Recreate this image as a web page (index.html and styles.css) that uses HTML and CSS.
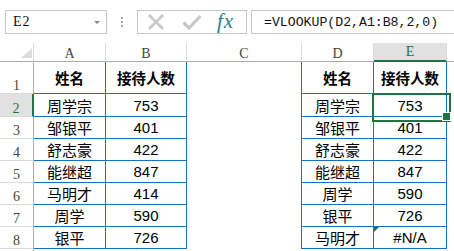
FILE: index.html
```html
<!DOCTYPE html>
<html lang="zh">
<head>
<meta charset="utf-8">
<title>VLOOKUP</title>
<link rel="stylesheet" href="styles.css">
</head>
<body>
<div class="fbar">
  <div class="namebox"><span>E2</span><span class="caret"></span></div>
  <div class="grip">
    <svg width="3" height="11" viewBox="0 0 3 11"><rect x="0" y="0" width="2" height="2" fill="#a8a8a8"/><rect x="0" y="4" width="2" height="2" fill="#a8a8a8"/><rect x="0" y="8" width="2" height="2" fill="#a8a8a8"/></svg>
  </div>
  <div class="icons">
    <svg class="ic-x" width="18" height="16" viewBox="0 0 18 16"><path d="M2 1 L16 15 M16 1 L2 15" stroke="#c8c8c8" stroke-width="2.6" fill="none"/></svg>
    <svg class="ic-ok" width="20" height="16" viewBox="0 0 20 16"><path d="M1.5 8.5 L7 14 L18.5 2" stroke="#c8c8c8" stroke-width="3.2" fill="none"/></svg>
    <span class="fx">fx</span>
  </div>
  <div class="formula">=VLOOKUP(D2,A1:B8,2,0)</div>
</div>

<div class="sheet">
  <div class="hd corner"><svg width="11" height="10" viewBox="0 0 11 10"><path d="M11 0 L11 10 L0 10 Z" fill="#dcdcdc"/></svg></div>
  <div class="hd"><span>A</span></div>
  <div class="hd"><span>B</span></div>
  <div class="hd"><span>C</span></div>
  <div class="hd"><span>D</span></div>
  <div class="hd sel"><span>E</span></div>
  <div class="hd end"></div>

  <div class="rh"><span>1</span></div>
  <div class="c t th">姓名</div><div class="c t th">接待人数</div><div class="c gap"></div><div class="c t th">姓名</div><div class="c t th">接待人数</div><div class="c"></div>

  <div class="rh sel"><span>2</span></div>
  <div class="c t">周学宗</div><div class="c t">753</div><div class="c gap"></div><div class="c t">周学宗</div><div class="c t active">753</div><div class="c"></div>

  <div class="rh"><span>3</span></div>
  <div class="c t">邹银平</div><div class="c t">401</div><div class="c gap"></div><div class="c t">邹银平</div><div class="c t">401</div><div class="c"></div>

  <div class="rh"><span>4</span></div>
  <div class="c t">舒志豪</div><div class="c t">422</div><div class="c gap"></div><div class="c t">舒志豪</div><div class="c t">422</div><div class="c"></div>

  <div class="rh"><span>5</span></div>
  <div class="c t">能继超</div><div class="c t">847</div><div class="c gap"></div><div class="c t">能继超</div><div class="c t">847</div><div class="c"></div>

  <div class="rh"><span>6</span></div>
  <div class="c t">马明才</div><div class="c t">414</div><div class="c gap"></div><div class="c t">周学</div><div class="c t">590</div><div class="c"></div>

  <div class="rh"><span>7</span></div>
  <div class="c t">周学</div><div class="c t">590</div><div class="c gap"></div><div class="c t">银平</div><div class="c t">726</div><div class="c"></div>

  <div class="rh"><span>8</span></div>
  <div class="c t">银平</div><div class="c t">726</div><div class="c gap"></div><div class="c t">马明才</div><div class="c t err">#N/A</div><div class="c"></div>

  <div class="rh last"></div>
  <div class="c"></div><div class="c"></div><div class="c"></div><div class="c"></div><div class="c"></div><div class="c"></div>
</div>
</body>
</html>
```

FILE: styles.css
```css
* { box-sizing: border-box; }
html, body { margin: 0; padding: 0; background: #fff; overflow: hidden; }
body { width: 454px; height: 251px; }

/* formula bar */
.fbar {
  display: flex;
  height: 24px;
  margin: 10px 0 9px 5px;
}
.namebox {
  width: 102px;
  border: 1px solid #c6c6c6;
  display: flex;
  align-items: center;
  padding-left: 7px;
  padding-right: 6px;
  font: 14px "Liberation Serif", serif;
  letter-spacing: 1px;
  color: #111;
}
.caret {
  margin-left: auto;
  width: 0; height: 0;
  border-left: 3px solid transparent;
  border-right: 3px solid transparent;
  border-top: 3px solid #8a8a8a;
}
.grip {
  width: 30px;
  display: flex;
  align-items: center;
  justify-content: center;
  padding-top: 1px;
}
.icons {
  width: 110px;
  border: 1px solid #c6c6c6;
  display: flex;
  align-items: center;
  padding-left: 9px;
}
.ic-ok { margin-left: 17px; }
.fx {
  margin-left: 15px;
  font: italic 21px "Liberation Serif", serif;
  letter-spacing: 1px;
  color: #2f7d8d;
  line-height: 1;
  margin-top: -2px;
}
.formula {
  flex: 1;
  margin-left: 4px;
  margin-right: -10px;
  border: 1px solid #c6c6c6;
  display: flex;
  align-items: center;
  padding-left: 12px;
  font: 13.2px "Liberation Mono", monospace;
  color: #111;
}

/* sheet */
.sheet {
  display: grid;
  grid-template-columns: 34px 72px 81px 115px 72px 73px 1fr;
  grid-template-rows: 19px 32px 23px repeat(6, 22px) 2px;
}
.hd, .rh {
  display: flex;
  align-items: flex-end;
  justify-content: center;
  font: 14px "Liberation Serif", serif;
  color: #444;
}
.hd span, .rh span { line-height: 16px; margin-bottom: -1px; }
.hd {
  border-right: 1px solid #dadada;
  border-bottom: 1px solid #ababab;
}
.hd.end { border-right: none; }
.hd.sel {
  background: #e1e1e1;
  color: #217346;
  border-bottom: 2px solid #217346;
}
.hd.sel span { margin-bottom: 0; }
.corner {
  justify-content: flex-end;
  padding: 0 1px 3px 0;
}
.corner svg { display: block; }
.rh {
  border-right: 1px solid #ababab;
  border-bottom: 1px solid #dadada;
}
.rh.last { border-bottom: none; }
.rh.sel {
  background: #e1e1e1;
  color: #217346;
  border-right: 2px solid #217346;
}

.c {
  display: flex;
  align-items: center;
  justify-content: center;
  font: 15px "Liberation Sans", "Noto Sans CJK SC", sans-serif;
  color: #000;
}
.t {
  border-right: 1px solid #1a6fc3;
  border-bottom: 1px solid #1a6fc3;
}
.gap { border-right: 1px solid #1a6fc3; }
.th {
  font-weight: bold;
  font-size: 14.5px;
}

.active { position: relative; }
.active::after {
  content: "";
  position: absolute;
  left: -2px;
  top: -1px;
  width: 75px;
  height: 25px;
  border: 2px solid #217346;
}
.active::before {
  content: "";
  position: absolute;
  left: 68px;
  top: 18px;
  width: 7px;
  height: 7px;
  background: #217346;
  border: 1px solid #fff;
  z-index: 2;
}
.err { position: relative; }
.err::before {
  content: "";
  position: absolute;
  left: 0;
  top: 0;
  border-top: 5px solid #217346;
  border-right: 5px solid transparent;
}
```
